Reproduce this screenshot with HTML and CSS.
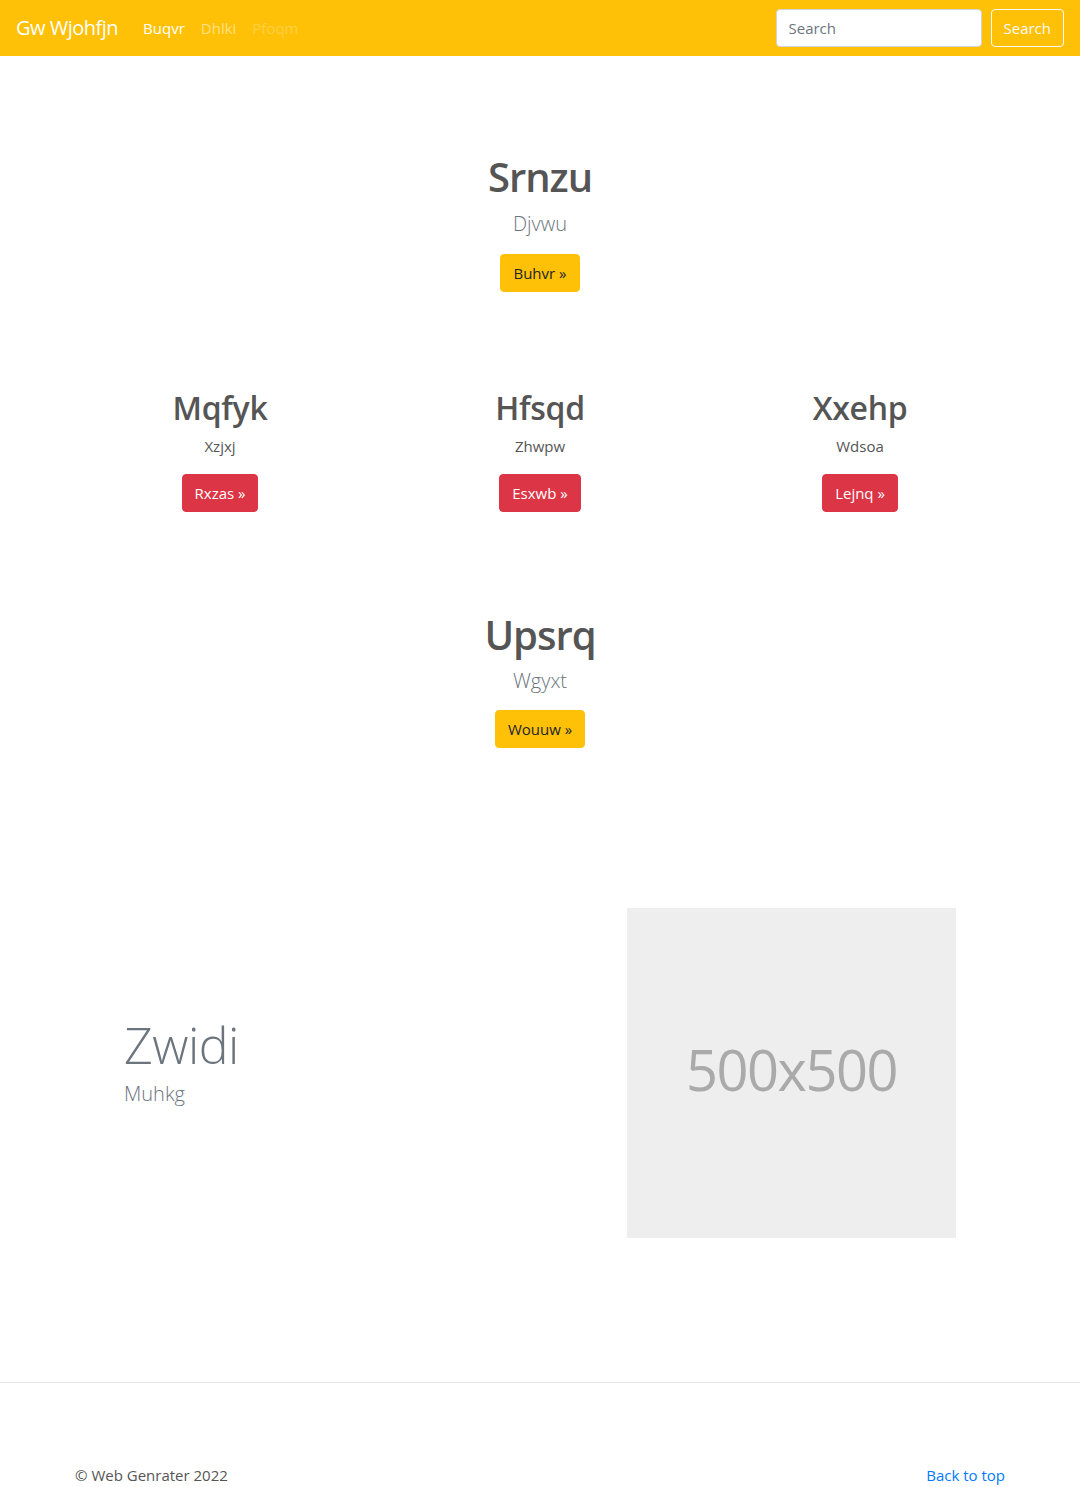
FILE: index.html
```html
<!DOCTYPE html>
<html lang="en">
<head>
<meta charset="utf-8">
<title>Gw Wjohfjn</title>
<link rel="stylesheet" href="styles.css">
</head>
<body>
<nav class="navbar">
  <a class="brand" href="#">Gw Wjohfjn</a>
  <ul class="nav">
    <li><a class="nav-link active" href="#">Buqvr</a></li>
    <li><a class="nav-link" href="#">Dhlki</a></li>
    <li><a class="nav-link disabled" href="#">Pfoqm</a></li>
  </ul>
  <form class="search">
    <input class="search-input" type="text" placeholder="Search">
    <button class="btn btn-outline-light" type="button">Search</button>
  </form>
</nav>

<main>
  <section class="hero">
    <h1 class="title">Srnzu</h1>
    <p class="lead">Djvwu</p>
    <a class="btn btn-warning" href="#">Buhvr »</a>
  </section>

  <section class="cols">
    <div class="col">
      <h2 class="col-title">Mqfyk</h2>
      <p class="col-text">Xzjxj</p>
      <a class="btn btn-danger" href="#">Rxzas »</a>
    </div>
    <div class="col">
      <h2 class="col-title">Hfsqd</h2>
      <p class="col-text">Zhwpw</p>
      <a class="btn btn-danger" href="#">Esxwb »</a>
    </div>
    <div class="col">
      <h2 class="col-title">Xxehp</h2>
      <p class="col-text">Wdsoa</p>
      <a class="btn btn-danger" href="#">Lejnq »</a>
    </div>
  </section>

  <section class="hero hero-2">
    <h1 class="title">Upsrq</h1>
    <p class="lead">Wgyxt</p>
    <a class="btn btn-warning" href="#">Wouuw »</a>
  </section>

  <section class="feature">
    <div class="feature-text">
      <h2 class="feature-heading">Zwidi</h2>
      <p class="lead feature-lead">Muhkg</p>
    </div>
    <div class="placeholder">500x500</div>
  </section>
</main>

<footer class="footer">
  <div class="footer-inner">
    <p class="copy">© Web Genrater 2022</p>
    <a class="top-link" href="#">Back to top</a>
  </div>
</footer>
</body>
</html>
```

FILE: styles.css
```css
* { box-sizing: border-box; }

body {
  margin: 0;
  font-family: "Open Sans", "Noto Sans", sans-serif;
  font-size: 16px;
  line-height: 1.5;
  color: #212529;
  background: #fff;
}

a { text-decoration: none; }

.navbar {
  height: 56px;
  background: #ffc107;
  display: flex;
  align-items: center;
  padding: 8px 16px;
}

.brand {
  color: #fff;
  font-size: 20px;
  letter-spacing: -0.5px;
  margin-right: 17px;
  white-space: nowrap;
}

.nav {
  display: flex;
  list-style: none;
  margin: 0;
  padding: 0;
  flex: 1;
}

.nav-link {
  display: block;
  padding: 8px 8px;
  font-size: 15px;
  color: rgba(255, 255, 255, 0.5);
}
.nav-link.active { color: #fff; }
.nav-link.disabled { color: rgba(255, 255, 255, 0.25); }

.search {
  display: flex;
  align-items: center;
}

.search-input {
  width: 206px;
  height: 38px;
  padding: 6px 12px;
  font: inherit;
  font-size: 15px;
  border: 1px solid #ced4da;
  border-radius: 4px;
  margin-right: 9px;
  background: #fff;
}
.search-input::placeholder { color: #6c757d; }

.btn {
  display: inline-block;
  height: 38px;
  padding: 6px 12px;
  font-family: inherit;
  font-size: 15px;
  line-height: 24px;
  border: 1px solid transparent;
  border-radius: 4px;
  background: transparent;
  cursor: pointer;
}

.btn-outline-light {
  color: #f8f9fa;
  border-color: #f8f9fa;
}

.btn-warning {
  background: #ffc107;
  border-color: #ffc107;
  color: #212529;
}

.btn-danger {
  background: #dc3545;
  border-color: #dc3545;
  color: #fff;
}

main { display: block; }

.hero {
  text-align: center;
  padding-top: 97px;
}

.title {
  margin: 0 0 8px;
  font-size: 40px;
  font-weight: 600;
  letter-spacing: -1px;
  line-height: 1.2;
  color: #555;
}

.lead {
  margin: 0 0 15px;
  font-size: 20px;
  font-weight: 300;
  line-height: 30px;
  color: #6c757d;
}

.cols {
  width: 960px;
  margin: 97px auto 0;
  display: grid;
  grid-template-columns: repeat(3, 1fr);
}

.col {
  padding: 0 15px;
  text-align: center;
}

.col-title {
  margin: 0 0 8px;
  font-size: 32px;
  font-weight: 600;
  letter-spacing: -0.3px;
  line-height: 1.2;
  color: #555;
}

.col-text {
  margin: 0 0 16px;
  font-size: 15px;
  color: #555;
}

.hero-2 { padding-top: 99px; }
.hero-2 .title { margin-bottom: 7px; }
.hero-2 .lead { margin-bottom: 14px; }

.feature {
  width: 832px;
  margin: 160px auto 0;
  display: flex;
  align-items: center;
  justify-content: space-between;
}

.feature-text { padding-bottom: 16px; }

.feature-heading {
  margin: 0 0 9px;
  font-size: 50px;
  font-weight: 300;
  letter-spacing: -0.5px;
  line-height: 1;
  color: #6c757d;
}

.feature-lead { margin: 0; }

.placeholder {
  width: 329px;
  height: 330px;
  padding-bottom: 8px;
  background: #eee;
  color: #aaa;
  font-size: 56px;
  letter-spacing: -1.5px;
  display: flex;
  align-items: center;
  justify-content: center;
}

.footer {
  margin-top: 144px;
  border-top: 1px solid #e5e5e5;
  padding-top: 81px;
}

.footer-inner {
  width: 960px;
  margin: 0 auto;
  padding: 0 15px;
  display: flex;
  justify-content: space-between;
  align-items: baseline;
}

.copy {
  margin: 0;
  color: #555;
  font-size: 15px;
}

.top-link {
  color: #007bff;
  font-size: 15px;
}
```
